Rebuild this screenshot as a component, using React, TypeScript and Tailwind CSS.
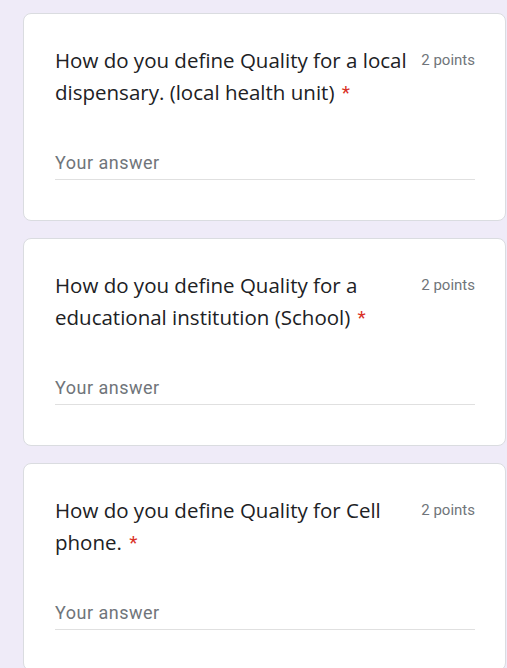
import React from "react";

const questions = [
  "How do you define Quality for a local dispensary. (local health unit)",
  "How do you define Quality for a educational institution (School)",
  "How do you define Quality for Cell phone.",
];

function Card({ q }: { q: string }) {
  return (
    <div className="bg-white border border-[#dadce0] rounded-[8px] pl-[31px] pr-[30px] pt-[30px] pb-[40px] h-[208px]">
      <div className="flex items-start justify-between">
        <div
          className="text-[20.5px] leading-[32px] text-[#202124] w-[360px]"
          style={{ fontFamily: '"Open Sans", sans-serif' }}
        >
          {q}{" "}
          <span
            className="ml-[2px] text-[19px] text-[#d93025] align-[1px]"
            style={{ fontFamily: "Roboto, sans-serif" }}
          >
            *
          </span>
        </div>
        <div
          className="text-[15px] leading-[32px] text-[#70757a] whitespace-nowrap"
          style={{ fontFamily: "Roboto, sans-serif" }}
        >
          2 points
        </div>
      </div>
      <div className="mt-[42px] border-b border-[#e0e0e0] pb-[4px]">
        <div
          className="text-[18px] leading-[24px] tracking-[0.5px] text-[#70757a]"
          style={{ fontFamily: "Roboto, sans-serif" }}
        >
          Your answer
        </div>
      </div>
    </div>
  );
}

export default function App() {
  return (
    <div className="min-h-[668px] h-[668px] overflow-hidden bg-[#efebf8] pt-[13px] pl-[23px] pr-[1px]">
      <div className="flex flex-col gap-[17px]">
        {questions.map((q) => (
          <Card key={q} q={q} />
        ))}
      </div>
    </div>
  );
}
